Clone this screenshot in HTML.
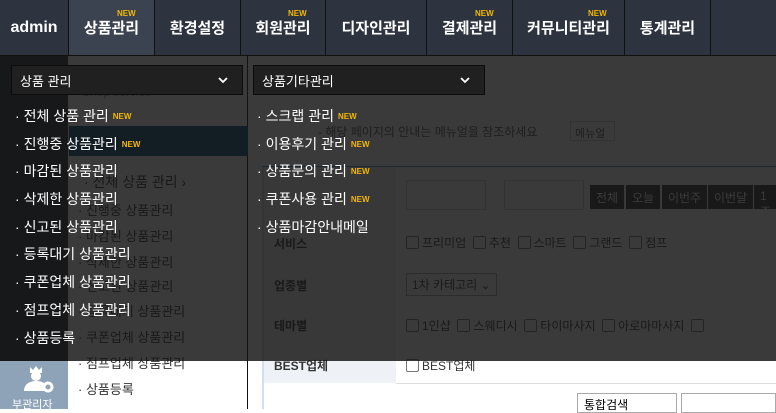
<!DOCTYPE html>
<html><head><meta charset="utf-8"><style>
*{margin:0;padding:0;box-sizing:border-box}
body{width:776px;height:409px;overflow:hidden;position:relative;background:#fff;font-family:"Liberation Sans","Noto Sans CJK KR",sans-serif;font-size:13px}
.abs{position:absolute}
#nav{left:0;top:0;width:776px;height:56px;background:#2d333f;border-bottom:1px solid #111}
.t{position:absolute;top:0;height:55px;border-right:1px solid #111;color:#fff;font-weight:bold;font-size:15px;display:flex;align-items:center;justify-content:center}
.t .n{position:absolute;top:9px;color:#f2b800;font-size:8px;font-weight:bold}
.n2{color:#f2b800;font-size:8px;font-weight:bold;margin-left:4px;vertical-align:2px}
.it{position:absolute;color:#fff;font-size:14px;white-space:nowrap}
.it:before{content:"·";margin-right:4px}
.g{position:absolute;color:#333;font-size:12px;white-space:nowrap}
.cb{display:inline-block;width:13px;height:13px;border:1px solid #777;border-radius:2px;vertical-align:-2px;margin-right:3px;background:#fff}
.btn{position:absolute;top:185px;height:24px;background:#333;color:#fff;font-size:12px;padding:4px 6px}
</style></head><body>
<!-- underlying page -->
<div class="abs" style="left:0;top:56px;width:68px;height:353px;background:#2a2f38"></div>
<div class="abs" style="left:0;top:361px;width:68px;height:48px;background:#8ea2b8"></div>
<svg class="abs" style="left:18px;top:363px" width="40" height="32" viewBox="0 0 40 32"><path d="M12 4l3 3 3-4 3 4 3-3v6H12z" fill="#fff"/><circle cx="18" cy="13" r="5" fill="#fff"/><path d="M6 28c0-7 6-10 12-10s8 2 9 3v7z" fill="#fff"/><circle cx="30" cy="24" r="4" fill="none" stroke="#fff" stroke-width="3"/></svg>
<div class="abs" style="left:12px;top:396px;color:#fff;font-size:11px">부관리자</div>
<div class="abs" style="left:68px;top:56px;width:180px;height:353px;background:#fff;border-right:1px solid #111"></div>
<div class="abs" style="left:69px;top:126px;width:179px;height:30px;background:#0d4a78"></div>
<div class="g" style="left:82px;top:85px;color:#999">Shop service</div>
<div class="g" style="left:84px;top:172px;font-size:14px">· 전체 상품 관리 ›</div>
<div class="g" style="left:78px;top:200px;font-size:13px">· 진행중 상품관리</div>
<div class="g" style="left:78px;top:226px;font-size:13px">· 마감된 상품관리</div>
<div class="g" style="left:78px;top:252px;font-size:13px">· 삭제한 상품관리</div>
<div class="g" style="left:78px;top:276px;font-size:13px">· 신고된 상품관리</div>
<div class="g" style="left:78px;top:301px;font-size:13px">· 등록대기 상품관리</div>
<div class="g" style="left:78px;top:327px;font-size:13px">· 쿠폰업체 상품관리</div>
<div class="g" style="left:78px;top:353px;font-size:13px">· 점프업체 상품관리</div>
<div class="g" style="left:78px;top:379px;font-size:13px">· 상품등록</div>
<div class="abs" style="left:262px;top:166px;width:514px;height:1px;background:#5b8fc0"></div>
<div class="abs" style="left:262px;top:167px;width:2px;height:242px;background:#cfe0f2"></div>
<div class="abs" style="left:264px;top:167px;width:132px;height:216px;background:#eef2f7"></div>
<div class="g" style="left:318px;top:123px;color:#555">- 해당 페이지의 안내는 메뉴얼을 참조하세요</div>
<div class="abs" style="left:570px;top:121px;width:45px;height:20px;border:1px solid #ccc;font-size:11px;padding:3px 4px;color:#555">메뉴얼</div>
<div class="g" style="left:274px;top:235px;font-weight:bold">서비스</div>
<div class="g" style="left:274px;top:277px;font-weight:bold">업종별</div>
<div class="g" style="left:274px;top:317px;font-weight:bold">테마별</div>
<div class="g" style="left:274px;top:357px;font-weight:bold">BEST업체</div>
<div class="g" style="left:406px;top:234px"><span class="cb"></span>프리미엄 &nbsp;<span class="cb"></span>추천 &nbsp;<span class="cb"></span>스마트 &nbsp;<span class="cb"></span>그랜드 &nbsp;<span class="cb"></span>점프</div>
<div class="g" style="left:406px;top:273px;border:1px solid #aaa;padding:2px 5px">1차 카테고리 ⌄</div>
<div class="g" style="left:406px;top:317px"><span class="cb"></span>1인샵 &nbsp;<span class="cb"></span>스웨디시 &nbsp;<span class="cb"></span>타이마사지 &nbsp;<span class="cb"></span>아로마마사지 &nbsp;<span class="cb"></span></div>
<div class="g" style="left:406px;top:357px"><span class="cb"></span>BEST업체</div>
<div class="abs" style="left:396px;top:383px;width:380px;height:1px;background:#ddd"></div>
<div class="abs" style="left:577px;top:393px;width:100px;height:20px;border:1px solid #aaa;font-size:12px;padding:2px 6px">통합검색</div>
<div class="abs" style="left:681px;top:393px;width:95px;height:20px;border:1px solid #aaa"></div>
<div class="abs" style="left:406px;top:180px;width:80px;height:30px;border:1px solid #ccc"></div>
<div class="abs" style="left:504px;top:180px;width:80px;height:30px;border:1px solid #ccc"></div>
<div class="btn" style="left:590px">전체</div>
<div class="btn" style="left:626px">오늘</div>
<div class="btn" style="left:662px">이번주</div>
<div class="btn" style="left:708px">이번달</div>
<div class="btn" style="left:754px">1주</div>
<!-- overlay -->
<div class="abs" style="left:0;top:56px;width:776px;height:305px;background:rgba(20,20,20,0.84)"></div>
<!-- nav -->
<div id="nav" class="abs">
<div class="t" style="left:0;width:69px;font-size:16px">admin</div>
<div class="t" style="left:69px;width:86px;background:#3c4350"><span class="n" style="left:48px">NEW</span>상품관리</div>
<div class="t" style="left:155px;width:86px">환경설정</div>
<div class="t" style="left:241px;width:85px"><span class="n" style="left:47px">NEW</span>회원관리</div>
<div class="t" style="left:326px;width:101px">디자인관리</div>
<div class="t" style="left:427px;width:86px"><span class="n" style="left:48px">NEW</span>결제관리</div>
<div class="t" style="left:513px;width:112px"><span class="n" style="left:75px">NEW</span>커뮤니티관리</div>
<div class="t" style="left:625px;width:86px">통계관리</div>
</div>
<!-- dropdowns -->
<div class="abs" style="left:11px;top:65px;width:232px;height:30px;background:#202020;border:1px solid #0c0c0c;color:#fff;padding:5px 8px;font-size:13px">상품 관리<svg style="position:absolute;right:14px;top:11px" width="10" height="7" viewBox="0 0 10 7"><path d="M1 1l4 4 4-4" fill="none" stroke="#fff" stroke-width="1.8"/></svg></div>
<div class="abs" style="left:253px;top:65px;width:232px;height:30px;background:#202020;border:1px solid #0c0c0c;color:#fff;padding:5px 8px;font-size:13px">상품기타관리<svg style="position:absolute;right:14px;top:11px" width="10" height="7" viewBox="0 0 10 7"><path d="M1 1l4 4 4-4" fill="none" stroke="#fff" stroke-width="1.8"/></svg></div>
<div class="it" style="left:15px;top:106px">전체 상품 관리<span class="n2">NEW</span></div>
<div class="it" style="left:15px;top:134px">진행중 상품관리<span class="n2">NEW</span></div>
<div class="it" style="left:15px;top:161px">마감된 상품관리</div>
<div class="it" style="left:15px;top:189px">삭제한 상품관리</div>
<div class="it" style="left:15px;top:217px">신고된 상품관리</div>
<div class="it" style="left:15px;top:244px">등록대기 상품관리</div>
<div class="it" style="left:15px;top:272px">쿠폰업체 상품관리</div>
<div class="it" style="left:15px;top:300px">점프업체 상품관리</div>
<div class="it" style="left:15px;top:328px">상품등록</div>
<div class="it" style="left:257px;top:106px">스크랩 관리<span class="n2">NEW</span></div>
<div class="it" style="left:257px;top:134px">이용후기 관리<span class="n2">NEW</span></div>
<div class="it" style="left:257px;top:161px">상품문의 관리<span class="n2">NEW</span></div>
<div class="it" style="left:257px;top:189px">쿠폰사용 관리<span class="n2">NEW</span></div>
<div class="it" style="left:257px;top:217px">상품마감안내메일</div>
</body></html>
